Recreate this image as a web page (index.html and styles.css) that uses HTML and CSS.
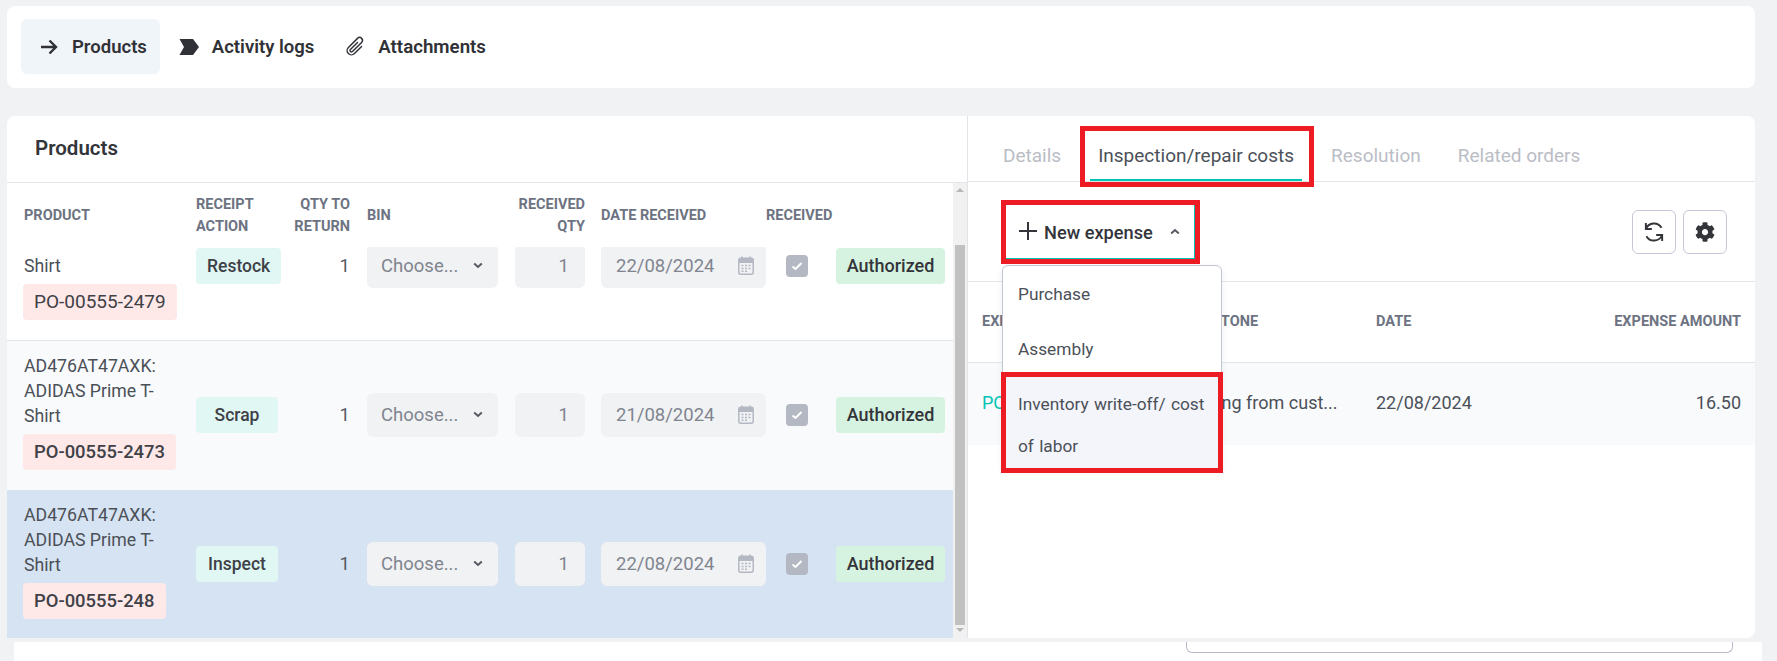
FILE: index.html
```html
<!DOCTYPE html>
<html lang="en">
<head>
<meta charset="utf-8">
<title>Products</title>
<link rel="stylesheet" href="styles.css">
</head>
<body>
<svg class="defs" width="0" height="0" aria-hidden="true">
  <symbol id="cal" viewBox="0 0 16 19">
    <path d="M4 .5v3M12 .5v3" fill="none" stroke="currentColor" stroke-width="1.6"/>
    <rect x=".8" y="2.3" width="14.4" height="15.9" rx="2" fill="none" stroke="currentColor" stroke-width="1.5"/>
    <path d="M1 3.5a1.500 1.500 0 0 1 1.500-1.500h11a1.500 1.500 0 0 1 1.500 1.500V7H1z" fill="currentColor"/>
    <path d="M3.500 9.500h2M7 9.500h2M10.500 9.500h2M3.500 12.500h2M7 12.500h2M10.500 12.500h2M3.500 15.300h2M7 15.300h2" stroke="currentColor" stroke-width="1.500"/>
  </symbol>
  <symbol id="chev" viewBox="0 0 10 7">
    <path d="M1.200 1.500 5 5l3.800-3.500" fill="none" stroke="currentColor" stroke-width="2"/>
  </symbol>
  <symbol id="tick" viewBox="0 0 12 10">
    <path d="M1.500 5.500 4.500 8l6-6" fill="none" stroke="#fff" stroke-width="2"/>
  </symbol>
</svg>

<nav class="topbar">
  <a class="nav-tab is-active">
    <svg class="nav-icon" viewBox="0 0 18 18"><path d="M1 9h15M9.500 2.500 16 9l-6.500 6.500" fill="none" stroke="currentColor" stroke-width="2.400"/></svg>
    Products
  </a>
  <a class="nav-tab">
    <svg class="nav-icon nav-icon-wide" viewBox="0 0 20 16"><path d="M.5 0H14l6 8-6 8H.5L5 8z" fill="currentColor"/></svg>
    Activity logs
  </a>
  <a class="nav-tab nav-tab-last">
    <svg class="nav-icon nav-icon-clip" viewBox="0 0 16 16"><path fill="currentColor" d="M4.500 3a2.500 2.500 0 0 1 5 0v9a1.500 1.500 0 0 1-3 0V5a.5.5 0 0 1 1 0v7a.5.5 0 0 0 1 0V3a1.500 1.500 0 1 0-3 0v9a2.500 2.500 0 0 0 5 0V5a.5.5 0 0 1 1 0v7a3.500 3.500 0 1 1-7 0V3z"/></svg>
    Attachments
  </a>
</nav>

<main class="panel">
  <section class="left">
    <h2 class="left-title">Products</h2>
    <div class="left-body">
      <div class="table">
        <div class="row-grid table-head">
          <div>Product</div>
          <div>Receipt<br>action</div>
          <div class="cell-right">Qty to<br>return</div>
          <div>Bin</div>
          <div class="cell-right cell-right-r">Received<br>qty</div>
          <div>Date received</div>
          <div>Received</div>
          <div></div>
        </div>
        <div class="table-rows">
          <div class="row-grid row row-first">
            <div class="product product-scrolled">Shirt<span class="po po-light">PO-00555-2479</span></div>
            <div><span class="chip chip-teal">Restock</span></div>
            <div class="cell-right qty">1</div>
            <div class="field field-select">Choose...<svg class="chev"><use href="#chev"/></svg></div>
            <div class="field field-num">1</div>
            <div class="field field-date">22/08/2024<svg class="cal"><use href="#cal"/></svg></div>
            <div class="check-cell"><span class="check"><svg><use href="#tick"/></svg></span></div>
            <div><span class="chip chip-green">Authorized</span></div>
          </div>
          <div class="row-grid row row-alt">
            <div class="product">AD476AT47AXK: ADIDAS Prime T-Shirt<span class="po">PO-00555-2473</span></div>
            <div><span class="chip chip-teal chip-fixed">Scrap</span></div>
            <div class="cell-right qty">1</div>
            <div class="field field-select">Choose...<svg class="chev"><use href="#chev"/></svg></div>
            <div class="field field-num">1</div>
            <div class="field field-date">21/08/2024<svg class="cal"><use href="#cal"/></svg></div>
            <div class="check-cell"><span class="check"><svg><use href="#tick"/></svg></span></div>
            <div><span class="chip chip-green">Authorized</span></div>
          </div>
          <div class="row-grid row row-selected">
            <div class="product">AD476AT47AXK: ADIDAS Prime T-Shirt<span class="po">PO-00555-248</span></div>
            <div><span class="chip chip-teal chip-fixed">Inspect</span></div>
            <div class="cell-right qty">1</div>
            <div class="field field-select">Choose...<svg class="chev"><use href="#chev"/></svg></div>
            <div class="field field-num">1</div>
            <div class="field field-date">22/08/2024<svg class="cal"><use href="#cal"/></svg></div>
            <div class="check-cell"><span class="check"><svg><use href="#tick"/></svg></span></div>
            <div><span class="chip chip-green">Authorized</span></div>
          </div>
        </div>
      </div>
      <div class="scrollbar">
        <span class="sb-up"></span>
        <span class="sb-thumb"></span>
        <span class="sb-down"></span>
      </div>
    </div>
  </section>

  <section class="right">
    <div class="tabs">
      <a class="tab">Details</a>
      <a class="tab tab-active">Inspection/repair costs<span class="mark mark-tab"></span></a>
      <a class="tab">Resolution</a>
      <a class="tab">Related orders</a>
    </div>

    <div class="toolbar">
      <div class="new-wrap">
        <button class="new-btn">
          <svg class="plus" viewBox="0 0 18 18"><path d="M9 0v18M0 9h18" stroke="currentColor" stroke-width="2"/></svg>
          <span class="new-label">New expense</span>
          <svg class="chev chev-up"><use href="#chev"/></svg>
          <span class="mark mark-btn"></span>
        </button>
        <ul class="menu">
          <li class="menu-item">Purchase</li>
          <li class="menu-item">Assembly</li>
          <li class="menu-item menu-item-hover">Inventory write-off/ cost of labor<span class="mark mark-item"></span></li>
        </ul>
      </div>
      <div class="tools">
        <button class="tool">
          <svg viewBox="0 0 20 20"><path d="M3.200 2.500v5h5M3.200 7.500A7.300 7.300 0 0 1 16.300 6.500M16.800 17.500v-5h-5M16.800 12.500A7.300 7.300 0 0 1 3.700 13.500" fill="none" stroke="currentColor" stroke-width="1.600"/></svg>
        </button>
        <button class="tool">
          <svg class="gear" viewBox="0 0 512 512"><path fill="currentColor" d="M487.400 315.700l-42.600-24.600c4.300-23.200 4.300-47 0-70.200l42.600-24.600c4.900-2.800 7.100-8.600 5.500-14-11.100-35.600-30-67.800-54.700-94.600-3.800-4.100-10-5.100-14.800-2.300L380.800 110c-17.900-15.400-38.500-27.300-60.800-35.100V25.800c0-5.600-3.900-10.500-9.400-11.700-36.700-8.200-74.300-7.800-109.200 0-5.500 1.200-9.400 6.100-9.400 11.700V75c-22.200 7.900-42.800 19.800-60.800 35.100L88.700 85.500c-4.900-2.800-11-1.900-14.800 2.300-24.700 26.700-43.600 58.900-54.700 94.600-1.700 5.400.6 11.200 5.500 14L67.300 221c-4.300 23.200-4.300 47 0 70.200l-42.600 24.600c-4.900 2.800-7.100 8.600-5.500 14 11.100 35.600 30 67.800 54.700 94.600 3.800 4.100 10 5.100 14.800 2.300l42.600-24.600c17.900 15.400 38.500 27.300 60.800 35.100v49.200c0 5.600 3.900 10.500 9.400 11.700 36.700 8.200 74.300 7.800 109.200 0 5.500-1.200 9.400-6.100 9.400-11.700v-49.200c22.200-7.900 42.800-19.800 60.800-35.100l42.600 24.600c4.900 2.800 11 1.900 14.800-2.300 24.700-26.700 43.600-58.900 54.700-94.600 1.500-5.500-.7-11.300-5.600-14.100zM256 336c-44.100 0-80-35.900-80-80s35.900-80 80-80 80 35.900 80 80-35.900 80-80 80z"/></svg>
        </button>
      </div>
    </div>

    <div class="exp-grid exp-head">
      <div>Expense</div>
      <div>Milestone</div>
      <div>Date</div>
      <div class="cell-right">Expense amount</div>
    </div>
    <div class="exp-grid exp-row">
      <div class="exp-link">PO-00555</div>
      <div class="exp-milestone">Shipping from cust...</div>
      <div>22/08/2024</div>
      <div class="cell-right">16.50</div>
    </div>
  </section>
</main>

<div class="below">
  <div class="below-box"></div>
</div>
</body>
</html>
```

FILE: styles.css
```css
* { box-sizing: border-box; }

html, body {
  margin: 0;
  height: 661px;
  overflow: hidden;
}

body {
  background: #f1f2f4;
  color: #4b5058;
  font-family: "Roboto", "Liberation Sans", sans-serif;
  font-size: 17.5px;
  padding: 6px 0 0 7px;
}

.defs { position: absolute; }

/* top navigation */
.topbar {
  width: 1748px;
  height: 82px;
  background: #fff;
  border-radius: 8px;
  padding: 13px 14px;
  display: flex;
}

.nav-tab {
  display: flex;
  align-items: center;
  gap: 14px;
  height: 55px;
  padding: 0 13px 0 19px;
  border-radius: 6px;
  color: #2f3136;
  font-size: 18.5px;
  font-weight: 600;
}

.nav-tab.is-active { background: #f0f5fa; }
.nav-tab-last { font-size: 18.7px; }

.nav-icon { width: 18px; height: 18px; flex: none; }
.nav-icon-wide { width: 20px; height: 16px; margin-right: -1px; }
.nav-icon-clip { width: 23px; height: 23px; transform: rotate(45deg); margin: 0 -3px 0 -2px; }

/* main panel */
.panel {
  width: 1748px;
  height: 522px;
  margin-top: 28px;
  background: #fff;
  border-radius: 8px 8px 8px 0;
  display: flex;
  overflow: hidden;
}

.left {
  width: 961px;
  flex: none;
  border-right: 1px solid #e2e4ea;
  display: flex;
  flex-direction: column;
}

.left-title {
  margin: 0;
  height: 67px;
  padding-left: 28px;
  border-bottom: 1px solid #e2e4ea;
  color: #33353a;
  font-size: 20.5px;
  font-weight: 600;
  line-height: 64px;
}

.left-body { flex: 1; display: flex; min-height: 0; }
.table { width: 946px; flex: none; display: flex; flex-direction: column; }

.row-grid {
  display: grid;
  grid-template-columns: 172px 97px 74px 148px 86px 165px 70px 109px;
  padding-left: 17px;
}

.table-head {
  height: 64px;
  flex: none;
  align-items: center;
  padding-top: 2px;
  color: #6d7382;
  font-size: 14.5px;
  font-weight: 700;
  line-height: 22px;
  text-transform: uppercase;
  background: #fff;
}

.cell-right { text-align: right; padding-right: 17px; }
.cell-right-r { padding-right: 16px; }

.table-rows { flex: 1; overflow: hidden; min-height: 0; }

.row {
  height: 149px;
  align-items: center;
  padding-bottom: 2px;
}

.row-first { margin-top: -56px; border-bottom: 1px solid #e2e4ea; height: 150px; padding-bottom: 0; }
.row-alt { background: #f9fafc; }
.row-selected { background: #d6e3f2; }

.product {
  align-self: start;
  padding-top: 13px;
  width: 162px;
  line-height: 25px;
  font-size: 17.7px;
}

.product-scrolled { padding-top: 63px; }

.po {
  display: table;
  height: 36px;
  line-height: 36px;
  margin: 5px 0 0 -1px;
  padding: 0 11px;
  background: #fee8e8;
  border-radius: 4px;
  font-size: 18.4px;
  font-weight: 500;
  white-space: nowrap;
  color: #3e4147;
}

.po-light { font-weight: 400; font-size: 19px; }

.chip {
  display: inline-block;
  height: 36px;
  line-height: 36px;
  padding: 0 11px;
  border-radius: 4px;
  font-weight: 500;
  font-size: 17.5px;
  color: #3e4147;
  vertical-align: middle;
}

.chip-teal { background: #e0f7f4; }
.chip-fixed { min-width: 82px; text-align: center; }
.chip-green { background: #d6f3e2; color: #33353a; width: 109px; text-align: center; padding: 0; font-size: 18px; }

.qty { font-size: 18.5px; color: #555a62; }

.field {
  height: 44px;
  background: #f1f2f4;
  border-radius: 6px;
  display: flex;
  align-items: center;
  color: #80858f;
  font-size: 18.5px;
}

.field-select { width: 131px; padding: 0 15px 0 14px; justify-content: space-between; }
.field-num { width: 70px; justify-content: flex-end; padding-right: 16px; }
.field-date { width: 165px; padding: 0 12px 0 15px; justify-content: space-between; }

.chev { width: 10px; height: 7px; color: #555a62; }
.cal { width: 16px; height: 19px; color: #b4b8c2; }

.check-cell { padding-left: 20px; display: flex; }
.check {
  width: 22px;
  height: 22px;
  background: #b4b8c2;
  border-radius: 4px;
  display: flex;
  align-items: center;
  justify-content: center;
}
.check svg { width: 12px; height: 10px; }

/* drawn scrollbar */
.scrollbar {
  width: 14px;
  flex: none;
  background: #f1f1f1;
  display: flex;
  flex-direction: column;
  align-items: center;
}

.sb-up, .sb-down {
  width: 0;
  height: 0;
  border-left: 4px solid transparent;
  border-right: 4px solid transparent;
}

.sb-up { margin-top: 5px; border-bottom: 4px solid #b8b8b8; }
.sb-thumb { width: 10px; height: 380px; margin-top: 53px; background: #c1c1c1; }
.sb-down { margin-top: 3px; border-top: 4px solid #b8b8b8; }

/* right pane */
.right { flex: 1; min-width: 0; display: flex; flex-direction: column; }

.tabs {
  height: 66px;
  flex: none;
  display: flex;
  gap: 21px;
  align-items: flex-end;
  padding-left: 27px;
  border-bottom: 1px solid #e2e4ea;
}

.tab {
  position: relative;
  padding: 0 8px 11px;
  line-height: 24px;
  font-size: 19px;
  color: #babdc5;
  border-bottom: 2px solid transparent;
}

.tab-active { color: #4b5058; border-bottom-color: #00c4b4; }

.mark {
  position: absolute;
  border: 5px solid #ed1c24;
  pointer-events: none;
  z-index: 5;
}

.mark-tab { top: -18px; bottom: -8px; left: -10px; right: -12px; }
.mark-btn { top: -5px; left: -5px; right: -6px; bottom: -6px; }
.mark-item { top: -4px; bottom: -4px; left: -2px; right: -2px; }

.toolbar {
  height: 100px;
  flex: none;
  display: flex;
  align-items: center;
  justify-content: space-between;
  padding: 0 28px 0 38px;
  border-bottom: 1px solid #e2e4ea;
}

.new-wrap { position: relative; }

.new-btn {
  position: relative;
  width: 189px;
  height: 54px;
  display: flex;
  align-items: center;
  padding: 0 0 0 13px;
  background: #fff;
  border: 0;
  border-right: 1px solid #00c4b4;
  border-bottom: 1px solid #00c4b4;
  font: 500 18.2px "Roboto", "Liberation Sans", sans-serif;
  color: #33353a;
}

.new-label { padding-top: 2px; }
.plus { width: 18px; height: 18px; margin-right: 7px; flex: none; }
.chev-up { transform: rotate(180deg); margin-left: 17px; color: #555a62; }

.menu {
  position: absolute;
  left: -4px;
  top: 60px;
  width: 220px;
  margin: 0;
  padding: 0;
  list-style: none;
  background: #fff;
  border: 1px solid #c2c5d2;
  border-radius: 6px;
  box-shadow: 0 2px 6px rgba(40, 45, 70, .08);
  z-index: 4;
}

.menu-item {
  position: relative;
  padding: 7.5px 10px 5.5px 15px;
  line-height: 42px;
  font-size: 17.3px;
  color: #4b5058;
}

.menu-item-hover { background: #f4f5fb; padding-bottom: 2px; word-spacing: 1px; }

.tools { display: flex; gap: 7px; }

.tool {
  width: 44px;
  height: 44px;
  padding: 0;
  background: #fff;
  border: 1px solid #c5c8d8;
  border-radius: 6px;
  display: flex;
  align-items: center;
  justify-content: center;
  color: #33353a;
}

.tool svg { width: 24px; height: 24px; }
.tool .gear { width: 20px; height: 20px; }

.exp-grid {
  display: grid;
  grid-template-columns: 197px 197px 1fr 200px;
  padding-left: 14px;
  align-items: center;
}

.exp-grid .cell-right { padding-right: 14px; }

.exp-head {
  height: 81px;
  flex: none;
  border-bottom: 1px solid #e2e4ea;
  color: #6d7382;
  font-size: 14.5px;
  font-weight: 700;
  text-transform: uppercase;
  padding-bottom: 2px;
}

.exp-row {
  height: 82px;
  flex: none;
  background: #f9fafc;
  font-size: 18px;
  padding-bottom: 3px;
}

.exp-link { color: #00c4b4; }
.exp-milestone { margin-left: -7px; }

/* strip below the panel */
.below {
  width: 1748px;
  height: 40px;
  margin: 4px 0 0 7px;
  background: #fff;
  padding-left: 1172px;
}

.below-box {
  width: 547px;
  height: 11px;
  border: 1px solid #b9bbcb;
  border-top: 0;
  border-radius: 0 0 6px 6px;
}
```
